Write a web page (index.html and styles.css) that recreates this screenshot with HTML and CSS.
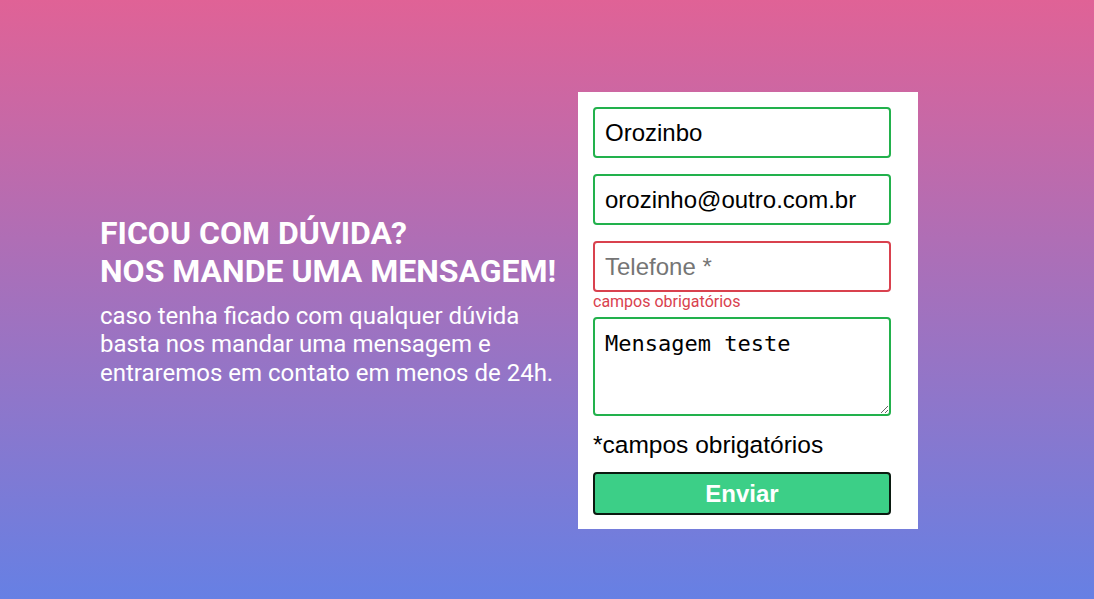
FILE: index.html
```html
<!DOCTYPE html>
<html lang="pt-BR">
<head>
<meta charset="utf-8">
<title>Contato</title>
<link rel="stylesheet" href="styles.css">
</head>
<body>
<main class="contact">
  <section class="intro">
    <h1 class="intro-title">FICOU COM DÚVIDA?<br>NOS MANDE UMA MENSAGEM!</h1>
    <p class="intro-text">caso tenha ficado com qualquer dúvida<br>basta nos mandar uma mensagem e<br>entraremos em contato em menos de 24h.</p>
  </section>
  <form class="form">
    <input class="field field-ok" type="text" value="Orozinbo">
    <input class="field field-ok" type="email" value="orozinho@outro.com.br">
    <div class="group">
      <input class="field field-error" type="tel" placeholder="Telefone *">
      <span class="error">campos obrigatórios</span>
    </div>
    <textarea class="field field-ok area">Mensagem teste</textarea>
    <p class="note">*campos obrigatórios</p>
    <button class="submit" type="button">Enviar</button>
  </form>
</main>
</body>
</html>
```
FILE: styles.css
```css
* { box-sizing: border-box; }
html, body { margin: 0; height: 100%; }
body {
  background: linear-gradient(180deg, #e06296 0%, #6680e4 100%);
  font-family: Roboto, "Liberation Sans", sans-serif;
  overflow: hidden;
}
.contact {
  height: 599px;
  display: flex;
  align-items: flex-start;
  padding: 92px 0 0 100px;
}
.intro {
  width: 478px;
  margin-top: 122px;
  color: #fff;
}
.intro-title {
  margin: 0;
  font-size: 32px;
  line-height: 38px;
  font-weight: 700;
}
.intro-text {
  margin: 11.5px 0 0;
  font-size: 24px;
  line-height: 28.5px;
  font-weight: 400;
}
.form {
  width: 340px;
  background: #fff;
  padding: 15px 27px 14px 15px;
  display: flex;
  flex-direction: column;
}
.field {
  display: block;
  width: 298px;
  height: 51px;
  border: 2px solid #22b14c;
  border-radius: 4px;
  padding: 0 10px;
  font-family: "Liberation Sans", Arial, sans-serif;
  font-size: 24px;
  color: #000;
  background: #fff;
  outline: none;
  margin: 0 0 16px;
}
.field-error { border-color: #d9414e; margin-bottom: 0; }
.field::placeholder { color: #757575; }
.group { display: flex; flex-direction: column; margin-bottom: 6px; }
.error {
  color: #d9414e;
  font-size: 16px;
  line-height: 18px;
  margin-top: 1px;
}
.area {
  height: 99px;
  padding: 12px 10px 10px;
  font-family: "DejaVu Sans Mono", monospace;
  font-size: 22px;
  line-height: 26px;
  resize: vertical;
  margin-bottom: 15px;
}
.note {
  margin: 0 0 13px;
  font-family: "Liberation Sans", Arial, sans-serif;
  font-size: 24.5px;
  line-height: 28px;
  color: #000;
}
.submit {
  width: 298px;
  height: 43px;
  background: #3ccf87;
  border: 2px solid #0b1a10;
  border-radius: 4px;
  color: #fff;
  font-family: "Liberation Sans", Arial, sans-serif;
  font-weight: 700;
  font-size: 24px;
  padding: 0;
}
```
